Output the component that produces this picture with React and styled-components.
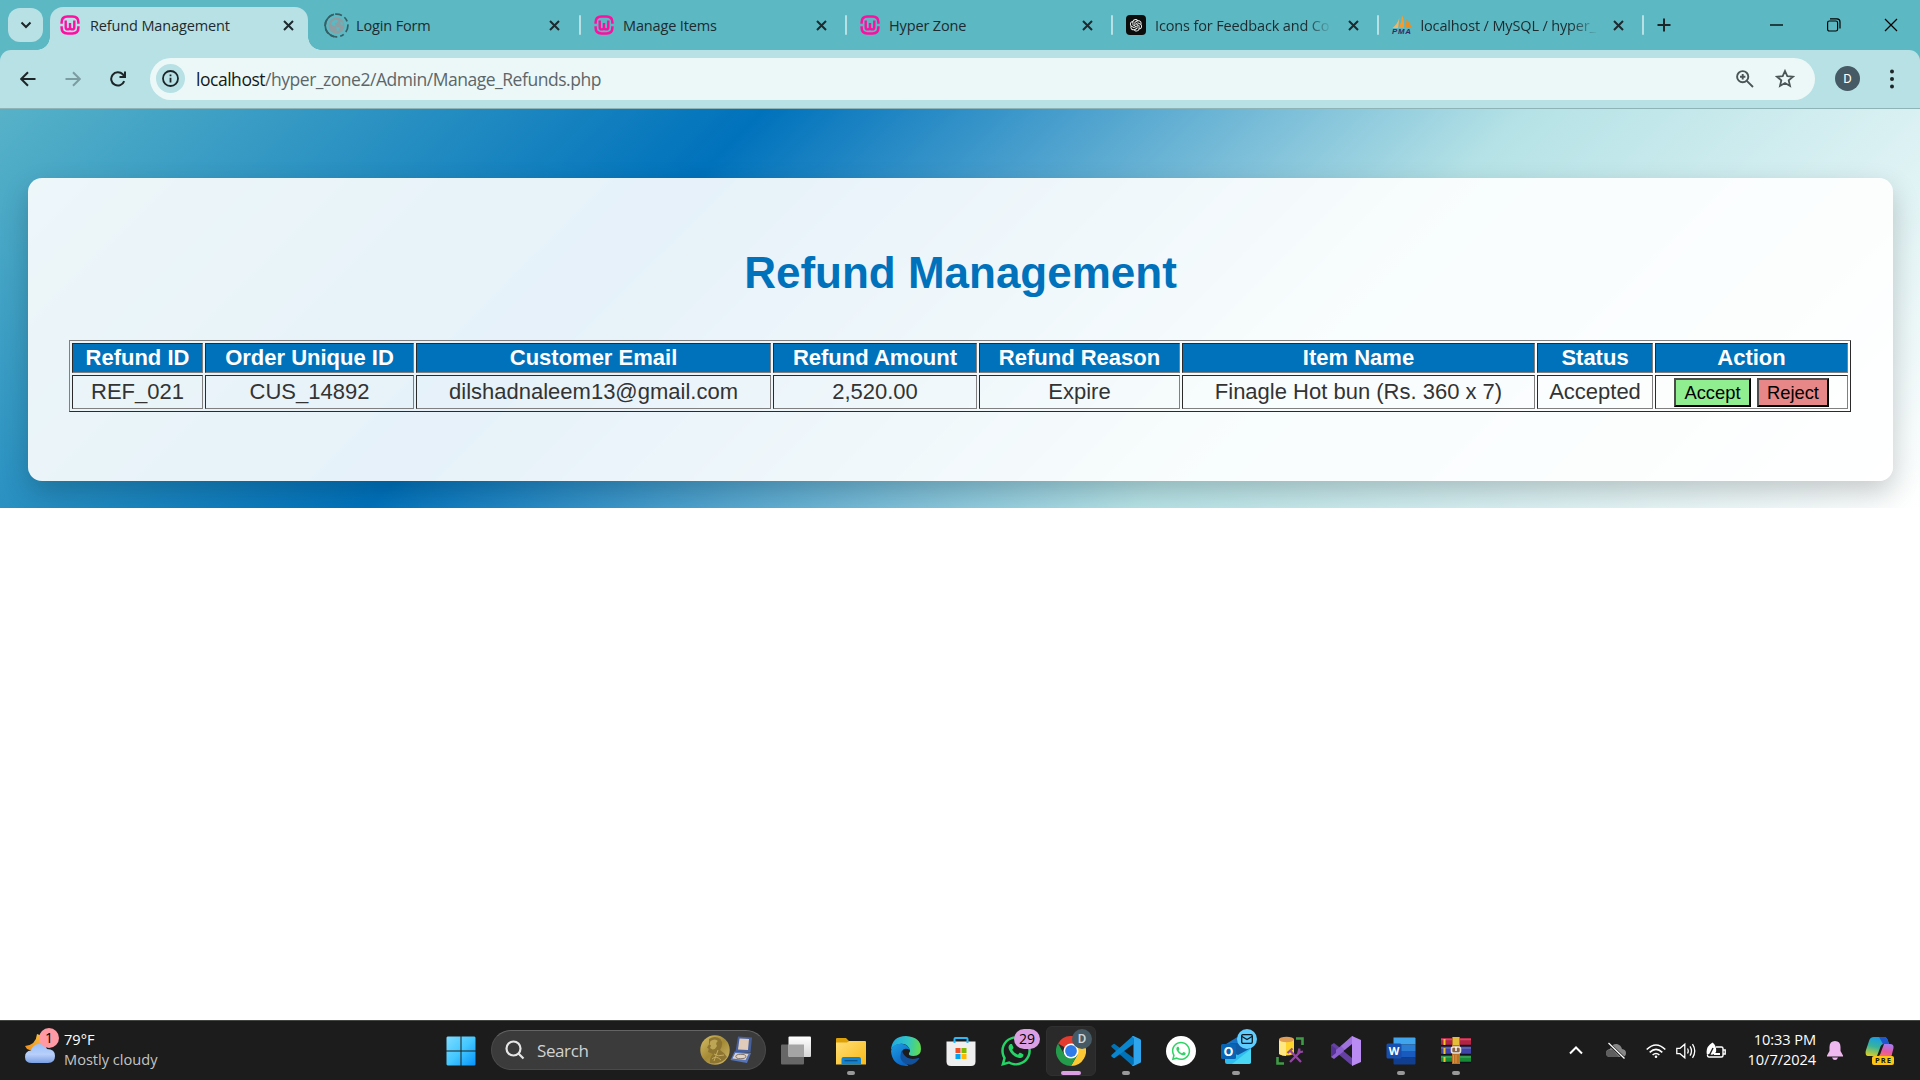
import React from 'react';
import styled, { createGlobalStyle } from 'styled-components';
import { FaWhatsapp } from 'react-icons/fa';
import { AiOutlineOpenAI } from 'react-icons/ai';

const ui = '"Segoe UI", "Open Sans", "Noto Sans", sans-serif';

const Global = createGlobalStyle`
  * { box-sizing: border-box; }
  html, body { margin: 0; padding: 0; background: #fff; }
  svg { display: block; flex: none; }
`;

const Screen = styled.div`
  width: 1920px;
  height: 1080px;
  display: flex;
  flex-direction: column;
  overflow: hidden;
  background: #fff;
`;

/* ---------- browser chrome ---------- */
const TabStrip = styled.div`
  height: 50px;
  flex: none;
  display: flex;
  background: #5cb8c2;
  font: 14.5px ${ui};
  color: #1d2b30;
`;
const TabSearch = styled.div`
  width: 35px;
  height: 34px;
  margin: 8px 7px 0 8px;
  border-radius: 12px;
  background: #b8e1e5;
  display: flex;
  align-items: center;
  justify-content: center;
`;
const Tab = styled.div`
  position: relative;
  width: ${p => p.$w || 266}px;
  height: 43px;
  margin-top: 7px;
  padding: 0 10px 7px;
  display: flex;
  align-items: center;
  border-radius: 13px 13px 0 0;
  background: ${p => (p.$active ? '#b8e1e5' : 'transparent')};
`;
const Flare = styled.i`
  position: absolute;
  bottom: 0;
  ${p => p.$side}: -13px;
  width: 13px;
  height: 13px;
  background: radial-gradient(circle at ${p => (p.$side === 'left' ? '0 0' : '100% 0')}, transparent 12.5px, #b8e1e5 13px);
`;
const Favicon = styled.span`
  width: ${p => p.$w || 20}px;
  margin-left: ${p => p.$ml || 0}px;
  margin-right: ${p => p.$mr || 10}px;
  flex: none;
  display: flex;
  align-items: center;
  justify-content: center;
`;
const TabTitle = styled.span`
  width: 179px;
  flex: none;
  white-space: nowrap;
  line-height: 22px;
  padding-top: 2px;
  letter-spacing: -0.14px;
  ${p => p.$fade && 'mask-image: linear-gradient(90deg, #000 150px, transparent 177px);'}
`;
const CloseBox = styled.span`
  width: 38px;
  flex: none;
  display: flex;
  justify-content: center;
`;
const Sep = styled.i`
  width: 2px;
  height: 20px;
  margin: 15px 0 0;
  background: #b8e1e5;
  border-radius: 1px;
  flex: none;
`;
const PlusBox = styled.span`
  width: 40px;
  height: 50px;
  display: flex;
  align-items: center;
  justify-content: center;
`;
const WindowControls = styled.div`
  margin-left: auto;
  margin-right: 1px;
  height: 49px;
  display: flex;
  align-items: center;
`;
const Control = styled.span`
  width: 57px;
  display: flex;
  justify-content: center;
`;
const ToolbarBack = styled.div`
  background: #5cb8c2;
  flex: none;
`;
const Toolbar = styled.div`
  height: 59px;
  padding: 0 11px 1px 5px;
  display: flex;
  align-items: center;
  border-radius: 11px 11px 0 0;
  border-bottom: 1px solid #8fb4b8;
  background: #b8e1e5;
`;
const ToolButton = styled.span`
  width: ${p => p.$w || 45}px;
  display: flex;
  align-items: center;
  justify-content: center;
`;
const Omnibox = styled.div`
  width: 1665px;
  height: 42px;
  margin-left: 10px;
  padding: 0 10px 0 6px;
  display: flex;
  align-items: center;
  border-radius: 21px;
  background: #ecf8f8;
  font: 17.5px ${ui};
  color: #5c6669;
`;
const InfoBadge = styled.span`
  width: 29px;
  height: 29px;
  border-radius: 50%;
  background: #b8e1e5;
  display: flex;
  align-items: center;
  justify-content: center;
`;
const Url = styled.span`
  margin-left: 11px;
  flex: 1;
  letter-spacing: -0.47px;
  b { font-weight: 400; color: #15191a; }
`;
const Avatar = styled.span`
  width: 25px;
  height: 25px;
  margin: 0 22px 0 20px;
  border-radius: 50%;
  background: #455a64;
  color: #fff;
  font: 13px/25px Roboto, sans-serif;
  text-align: center;
`;

/* ---------- page ---------- */
const Page = styled.div`
  height: 399px;
  flex: none;
  padding: 69px 27px 27px 28px;
  background: linear-gradient(135deg, #57b2c8, #0072bc 33%, #b5e2e6 66%, #fff);
  font-family: Arial, "Liberation Sans", sans-serif;
  color: #333;
  overflow: hidden;
`;
const Card = styled.div`
  height: 303px;
  padding: 41px;
  border-radius: 14px;
  background: rgba(255, 255, 255, 0.9);
  box-shadow: 0 11px 28px rgba(0, 0, 0, 0.2);
`;
const Heading = styled.h1`
  margin: 28px 0 42px;
  font-size: 44px;
  line-height: 51px;
  text-align: center;
  color: #0072bc;
`;
const Table = styled.table`
  width: 1782px;
  table-layout: fixed;
  border: 1px solid;
  border-color: #808080 #2b2b2b #2b2b2b #808080;
  border-spacing: 2px;
  font-size: 22px;
  text-align: center;
`;
const cell = `
  padding: 1px;
  border: 1px solid;
  border-color: #2b2b2b #808080 #808080 #2b2b2b;
  white-space: nowrap;
`;
const Th = styled.th`
  ${cell}
  width: ${p => p.$w}px;
  height: 30px;
  line-height: 26px;
  background: #0072bc;
  color: #fff;
`;
const Td = styled.td`
  ${cell}
  height: 34px;
  line-height: 26px;
`;
const Actions = styled.div`
  display: flex;
  justify-content: center;
  gap: 6px;
  margin-top: 1px;
`;
const ActionButton = styled.button`
  width: ${p => p.$w}px;
  height: 29px;
  padding: 0 0 1px;
  border: 2px outset #000;
  border-color: #4c4c4c #000 #000 #4c4c4c;
  background: ${p => p.$bg};
  color: #000;
  font: 18.33px/23px Arial, "Liberation Sans", sans-serif;
`;

/* ---------- taskbar ---------- */
const Taskbar = styled.div`
  height: 60px;
  margin-top: auto;
  flex: none;
  display: flex;
  align-items: stretch;
  border-top: 1px solid #424542;
  background: #1c1c1c;
  color: #fff;
  font: 14.6px/20px ${ui};
`;
const Weather = styled.div`
  width: 433px;
  padding: 8px 0 0 25px;
  display: flex;
  gap: 9px;
`;
const WeatherIcon = styled.div`
  position: relative;
  width: 30px;
  height: 40px;
`;
const Lines = styled.div`
  display: flex;
  flex-direction: column;
  letter-spacing: ${p => p.$ls || 0}px;
  text-align: ${p => p.$align || 'left'};
  white-space: nowrap;
`;
const Muted = styled.span`
  color: #c4c4c4;
`;
const AppSlot = styled.div`
  position: relative;
  width: 55px;
  height: 59px;
  display: flex;
  align-items: center;
  justify-content: center;
`;
const Tile = styled.div`
  width: 50px;
  height: 50px;
  display: flex;
  align-items: center;
  justify-content: center;
  border-radius: 6px;
  ${p => p.$active && 'background: #2a2a2a; border: 1px solid #303030;'}
`;
const Indicator = styled.i`
  position: absolute;
  bottom: 5px;
  left: 50%;
  transform: translateX(-50%);
  width: ${p => (p.$active ? 20 : 8)}px;
  height: 4px;
  border-radius: 2px;
  background: ${p => (p.$active ? '#dc9fe4' : '#999')};
`;
const Badge = styled.span`
  position: absolute;
  top: ${p => p.$top}px;
  left: ${p => p.$left}px;
  width: ${p => p.$w || 20}px;
  height: 20px;
  border-radius: 10px;
  display: flex;
  align-items: center;
  justify-content: center;
  background: ${p => p.$bg};
  color: ${p => p.$fg || '#000'};
  font: ${p => p.$font || `14px/20px ${ui}`};
`;
const SearchBox = styled.div`
  width: 275px;
  height: 40px;
  margin: 9px 2px 0 3px;
  padding: 0 11px 0 13px;
  display: flex;
  align-items: center;
  border: 1px solid #4a4a4a;
  border-top-color: #646464;
  border-radius: 20px;
  background: #3b3b3b;
  color: #d2d2d2;
  font-size: 17px;
  letter-spacing: -0.4px;
`;
const SearchLabel = styled.span`
  flex: 1;
  margin-left: 12px;
  padding-top: 1px;
`;
const Tray = styled.div`
  margin-left: auto;
  width: 360px;
  display: flex;
  align-items: center;
`;
const TrayIcon = styled.span`
  width: ${p => p.$w}px;
  flex: none;
  display: flex;
  align-items: center;
  justify-content: center;
`;
const Clock = styled(Lines)`
  width: 85px;
  margin-top: -3px;
`;

/* ---------- drawings ---------- */
const CloseX = ({ s = 9, w = 2, c = '#1d2b30' }) => (
  <svg width={s + 2} height={s + 2} viewBox={`-1 -1 ${s + 2} ${s + 2}`} stroke={c} strokeWidth={w}>
    <path d={`M0 0L${s} ${s}M${s} 0L0 ${s}`} />
  </svg>
);
const Wamp = () => (
  <svg width="20" height="20" viewBox="0 0 20 20" fill="none" stroke="#ff0fa0">
    <path d="M1.600 8.700V7.500Q1.600 1.600 7.500 1.600H12.500Q18.400 1.600 18.400 7.500V8.700M1.600 11.300V12.500Q1.600 18.400 7.500 18.400H12.500Q18.400 18.400 18.400 12.500V11.300" strokeWidth="2.500" />
    <path d="M5.700 5.400V12.200Q5.700 14.400 7.800 14.400Q10 14.400 10 12.200V8M10 12.200Q10 14.400 12.200 14.400Q14.300 14.400 14.300 12.200V5.400" strokeWidth="2.400" />
  </svg>
);
const Globe = () => (
  <svg width="25" height="25" viewBox="0 0 25 25">
    <circle cx="12.500" cy="12.500" r="11.400" fill="none" stroke="#365f66" strokeWidth="1.700" strokeDasharray="7 3 4 3 7 3 5 3" />
    <path d="M10 23.600A11.400 11.400 0 0 1 10 1.400" fill="none" stroke="#365f66" strokeWidth="1.700" />
    <circle cx="12.500" cy="12.500" r="8" fill="#8e9da1" />
    <path d="M8 8.300L11.600 6.500L14.500 7.800L12.200 10L10.500 10.600L12 12.400L10.400 13.300L7 11.200ZM12.200 13.500L15.800 14.600L14.700 17.400L12.700 18.200ZM16.200 8.600L18.500 9.400L18.800 12.300L16.500 11.600Z" fill="#5cb8c2" />
  </svg>
);
const Gpt = () => (
  <svg width="20" height="20" viewBox="0 0 20 20">
    <rect width="20" height="20" rx="4" fill="#0b0d0d" />
    <AiOutlineOpenAI x="2" y="2" size={16} color="#f0f0f0" />
  </svg>
);
const Pma = () => (
  <svg width="21" height="20" viewBox="0 0 21 20" overflow="visible">
    <path d="M8.300 3L7.200 13H1.400Q6.500 9 8.300 3Z" fill="#f5b563" />
    <path d="M11 0Q14 6 12.800 13H7.800Q11 7 11 0Z" fill="#f89c2c" />
    <path d="M15.500 4Q20 9 20.200 13H13.500Q16 9 15.500 4Z" fill="#ee8d20" />
    <text x="10.500" y="19.200" textAnchor="middle" fontFamily="Liberation Sans" fontWeight="700" fontStyle="italic" fontSize="7.800" textLength="19" fill="#2f2b68">PMA</text>
  </svg>
);
const Line = ({ w = 20, h = 20, sw = 2, c = '#1d2528', children, ...r }) => (
  <svg width={w} height={h} viewBox={`0 0 ${w} ${h}`} fill="none" stroke={c} strokeWidth={sw} {...r}>{children}</svg>
);
const Icon30 = ({ children }) => <svg width="30" height="30" viewBox="0 0 30 30">{children}</svg>;

const WindowsLogo = () => (
  <Icon30>
    <defs><linearGradient id="win" x1="0" y1="0" x2="1" y2="1" gradientUnits="objectBoundingBox">
      <stop stopColor="#7fdcff" /><stop offset=".5" stopColor="#43c8ff" /><stop offset="1" stopColor="#0792fa" /></linearGradient></defs>
    <path fill="url(#win)" d="M1.500 .5H14.500V14.500H.5V1.500ZM15.500 .5H28.500L29.500 1.500V14.500H15.500ZM.5 15.500H14.500V29.500H1.500L.5 28.500ZM15.500 15.500H29.500V28.500L28.500 29.500H15.500Z" />
  </Icon30>
);
const Medal = () => (
  <svg width="30" height="30" viewBox="0 0 30 30">
    <defs><linearGradient id="gold" x1="0" y1="0" x2="1" y2="1"><stop stopColor="#d5be69" /><stop offset=".5" stopColor="#a58a35" /><stop offset="1" stopColor="#d0bb70" /></linearGradient></defs>
    <circle cx="15" cy="15" r="14.700" fill="url(#gold)" />
    <path d="M9 4Q15 0 20.500 4Q24 9 20 15Q25 18 27 22Q21 30 10 28Q9 23 13 19L8 17L8.700 14L7 12.500L9 9.500Z" fill="#8d7431" />
    <path d="M10.500 6Q15 3 18 6Q15 8 17 11Q15 15 12.500 14.500L10 13L11 10.500L9.500 9.500Z" fill="#bda556" />
    <path d="M14 19Q18 22 24 20M12 24Q16 20 21 25M18 15L14 26" fill="none" stroke="#c5ad5d" strokeWidth="1" />
  </svg>
);
const MedalBox = () => (
  <svg width="24" height="28" viewBox="0 0 24 28">
    <path d="M8 .5L22 1.500L20.500 16.500L5.500 15.500Z" fill="#46609c" />
    <path d="M9.500 2.500L19 3L18 14L8 13.500Z" fill="#e0cbbb" />
    <path d="M4.500 15.500L21 17L17 27L.5 24Z" fill="#5674b8" />
    <path d="M5.300 17L18.500 18L15.500 24L2.500 22.500Z" fill="#dfd4ca" />
    <ellipse cx="10.800" cy="20.500" rx="5" ry="2.200" fill="none" stroke="#7d726a" />
  </svg>
);
const TaskView = () => (
  <Icon30>
    <defs><linearGradient id="tv" x1="0" y1="0" x2="0" y2="1"><stop stopColor="#fff" /><stop offset="1" stopColor="#d6d6d6" /></linearGradient></defs>
    <rect x="0" y="8.500" width="23" height="20" rx="1" fill="#676767" />
    <rect x="7.500" y=".5" width="22.500" height="20.500" rx="1" fill="url(#tv)" />
    <path d="M7.500 8.500H23V21H8.500L7.500 20Z" fill="#a5a5a5" />
  </Icon30>
);
const Folder = () => (
  <Icon30>
    <defs><linearGradient id="fo" x1="0" y1="0" x2="1" y2="1"><stop stopColor="#ffdf78" /><stop offset="1" stopColor="#f8b915" /></linearGradient></defs>
    <path d="M0 3Q0 2 1 2H10L13 5H27V12H0Z" fill="#dda006" />
    <path d="M0 6.500H11L13.500 5H29Q30 5 30 6V28.500H0Z" fill="url(#fo)" />
    <path d="M5.500 28.500V23Q5.500 21 7.500 21H23Q25 21 25 23V28.500Z" fill="#1283d0" />
    <path d="M8.500 24.700H21.500" stroke="#0b4e86" strokeWidth="1.200" />
  </Icon30>
);
const Edge = () => (
  <Icon30>
    <defs>
      <linearGradient id="e1" x1="0" y1=".3" x2="1" y2=".4"><stop stopColor="#1fa9e3" /><stop offset=".55" stopColor="#31c6c5" /><stop offset="1" stopColor="#61dc4e" /></linearGradient>
      <linearGradient id="e2" x1="0" y1="0" x2=".6" y2="1"><stop stopColor="#1d9fe2" /><stop offset="1" stopColor="#0b63c4" /></linearGradient>
    </defs>
    <path d="M0 14Q1 0 15 0Q30 1 30 13Q30 20 22.500 20Q17 20 18 17Q20 15 18 12Q15 7 8.500 8Q2.500 9 0 14Z" fill="url(#e1)" />
    <path d="M0 15Q2 7.700 9.500 7.700Q17 8 19 14Q13 10.500 10.500 16Q9 23 16 28.500Q19 30 15 30Q1 29 0 15Z" fill="url(#e2)" />
    <path d="M11 14.500Q7 23 13 27Q21 32 28 23Q29 21.500 27 22Q17 25 12.500 18Q11.500 16 11 14.500Z" fill="#12529d" />
  </Icon30>
);
const Store = () => (
  <Icon30>
    <path d="M.5 5.500H29.500V25.500Q29.500 30 25 30H5Q.5 30 .5 25.500Z" fill="#efefef" />
    <path d="M9.500 12H14.500V17H9.500Z" fill="#f25022" /><path d="M15.500 12H20.500V17H15.500Z" fill="#7fba00" />
    <path d="M9.500 18H14.500V23H9.500Z" fill="#00a4ef" /><path d="M15.500 18H20.500V23H15.500Z" fill="#ffb900" />
    <path d="M8.500 7V3Q8.500 2 9.500 2H20.500Q21.500 2 21.500 3V7" fill="none" stroke="#30b7f3" strokeWidth="2" />
  </Icon30>
);
const Chrome = () => (
  <Icon30>
    <path d="M15 15L2 7.500A15 15 0 0 1 28 7.500H15Z" fill="#e33b2e" />
    <path d="M15 7.500H28A15 15 0 0 1 15 30L21.500 18.700Z" fill="#fcc934" />
    <path d="M2 7.500A15 15 0 0 0 15 30L21.500 18.800L15 22.500L8.500 18.700Z" fill="#249a4b" />
    <circle cx="15" cy="15" r="7.500" fill="#fff" /><circle cx="15" cy="15" r="5.900" fill="#2f7bea" />
  </Icon30>
);
const VsCode = () => (
  <Icon30>
    <path d="M.5 9.500L2.500 8Q3.300 7.600 4 8.200L22.500 22V29.700Q21.500 29.800 20.700 29L.5 11Q0 10.200 .5 9.500Z" fill="#0072b8" />
    <path d="M.5 20.500L2.500 22Q3.300 22.400 4 21.800L22.500 8V.3Q21.500 .2 20.700 1L.5 19Q0 19.800 .5 20.500Z" fill="#0a86cf" />
    <path d="M22.500 0L29 3Q30 3.500 30 4.500V25.500Q30 26.500 29 27L22.500 30Q21.300 30 20.700 29Q22.500 29.500 22.500 27.500V2.500Q22.500 .5 20.700 1Q21.300 0 22.500 0Z" fill="#2fa5ee" />
  </Icon30>
);
const WhiteWhatsapp = () => (
  <Icon30><circle cx="15" cy="15" r="15" fill="#fff" /><FaWhatsapp x="4.500" y="4.500" size={21} color="#30d366" /></Icon30>
);
const Outlook = () => (
  <Icon30>
    <path d="M5 8L18 0L30 8V16H5Z" fill="#1673c6" />
    <path d="M9 7H22L29 12L24 20H12Z" fill="#0e5aa7" />
    <path d="M4 15L17 19L30 12V25.500Q30 28 27.500 28H6Q4 28 4 26Z" fill="#2ebdec" />
    <path d="M11 28L30 13V25.500Q30 28 27.500 28Z" fill="#49d7f4" />
    <rect y="8" width="15" height="15" rx="1.500" fill="#0864b4" />
    <text x="7.500" y="20" textAnchor="middle" fontFamily="Open Sans" fontWeight="700" fontSize="12.500" fill="#fff">O</text>
  </Icon30>
);
const SqlTool = () => (
  <Icon30>
    <path d="M3 3V18Q9 21 18 18V3Z" fill="#ffd52d" /><path d="M3 3V18Q6 20 10 20V3Z" fill="#ffe784" />
    <ellipse cx="10.500" cy="3.500" rx="7.500" ry="2.700" fill="#df9d55" />
    <path d="M20 2.500H26.500V9M1.500 21V27.500H8" fill="none" stroke="#3f9b46" strokeWidth="2.600" />
    <path d="M14 26L25 15M14.500 15L25 26M11.500 17L16.500 12.500M23.500 12.500L22.500 16.500L27 15.500" fill="none" stroke="#91479f" strokeWidth="2.300" />
  </Icon30>
);
const VisualStudio = () => (
  <Icon30>
    <path d="M0 9L3 7L22 22V30L19 28L0 12Z" fill="#6541a1" />
    <path d="M0 21L3 23L22 8V0L0 18Z" fill="#8c5fce" />
    <path d="M0 9L5 13V17L0 21Z" fill="#563196" />
    <path d="M21 0L30 4V26L21 30Z" fill="#bb8bf4" />
    <path d="M21 0L10 10L21 21Z" fill="#9f72de" />
    <path d="M21 8L12.500 15L21 22Z" fill="#1c1c1c" />
  </Icon30>
);
const Word = () => (
  <Icon30>
    <path d="M7.500 1.500H28.500Q29.500 1.500 29.500 2.500V8.500H7.500Z" fill="#41a5ee" /><path d="M7.500 8.500H29.500V15H7.500Z" fill="#2b7cd3" />
    <path d="M7.500 15H29.500V21.500H7.500Z" fill="#185abd" /><path d="M7.500 21.500H29.500V27.500Q29.500 28.500 28.500 28.500H8.500Q7.500 28.500 7.500 27.500Z" fill="#103f91" />
    <rect x=".5" y="7.500" width="15" height="15" rx="1.500" fill="#174fae" />
    <text x="8" y="19" textAnchor="middle" fontFamily="Open Sans" fontWeight="700" fontSize="11" fill="#fff">W</text>
  </Icon30>
);
const WinRar = () => (
  <Icon30>
    <path d="M0 2H30V10H0Z" fill="#b52344" /><path d="M0 10.500H30V19H0Z" fill="#3f43a8" /><path d="M0 19.500H30V27H0Z" fill="#168a35" />
    <path d="M0 3.500H30M0 12H30M0 21H30" stroke="#ffffff33" strokeWidth="1.500" />
    <path d="M0 9.500H30M0 18.500H30M0 26.500H30" stroke="#10131b" strokeWidth="1.400" />
    <path d="M3.500 3V9M3.500 12V18M3.500 21V26" stroke="#f0c32b" strokeWidth="2" />
    <path d="M11 1H19V28H11Z" fill="#b9742a" /><path d="M12 1H18V9H12Z" fill="#e4bd3b" /><path d="M12.500 19V27M15 19V27" stroke="#e2963c" />
    <rect x="10.500" y="11" width="9" height="6" rx="2" fill="#8c6140" stroke="#e5e5df" strokeWidth="1.600" /><path d="M15 11V15" stroke="#fff" strokeWidth="1.500" />
  </Icon30>
);
const Cloudy = () => (
  <svg width="30" height="38" viewBox="0 0 30 38">
    <defs>
      <linearGradient id="cl" x1="0" y1="0" x2="0" y2="1"><stop stopColor="#9cc0fa" /><stop offset=".55" stopColor="#b7cffa" /><stop offset="1" stopColor="#7a9fe4" /></linearGradient>
      <linearGradient id="mo" x1="1" y1="0" x2="0" y2="1"><stop stopColor="#f8c544" /><stop offset="1" stopColor="#ef8a15" /></linearGradient>
    </defs>
    <path d="M12 5Q21 7 19 17Q14 26 2 20L0 17Q11 16 12 5Z" fill="url(#mo)" />
    <path d="M7 34Q0 34 0 28Q0 22 6 21.500Q8 15 14 15Q20 15 22 20Q30 20 30 27Q30 34 23 34Z" fill="url(#cl)" />
  </svg>
);
const Copilot = () => (
  <svg width="30" height="30" viewBox="0 0 30 30">
    <defs>
      <linearGradient id="c1" x1=".5" y1="0" x2=".2" y2="1"><stop stopColor="#169bea" /><stop offset=".5" stopColor="#38b39b" /><stop offset="1" stopColor="#d9cf28" /></linearGradient>
      <linearGradient id="c2" x1=".6" y1="0" x2=".3" y2="1"><stop stopColor="#a77bf0" /><stop offset=".5" stopColor="#e657a0" /><stop offset="1" stopColor="#fb7b52" /></linearGradient>
    </defs>
    <path d="M9 1H19Q22 1 23 5L24 8H19Q16 8 15 12L12 20H3Q0 20 .7 15L4 5Q5 1 9 1Z" fill="url(#c1)" />
    <path d="M14 1H19Q22 1 23 5L24 8H18Z" fill="#2057cd" />
    <path d="M19 8H25Q29 8 28.500 12L26 22H10L12 20H13Q15 20 16 16Z" fill="url(#c2)" />
    <rect x="7" y="20" width="22" height="9" rx="2" fill="#ffc511" />
    <text x="18" y="27.300" textAnchor="middle" fontFamily="Open Sans" fontWeight="700" fontSize="7.500" textLength="16" fill="#171717">PRE</text>
  </svg>
);

const tabs = [
  { title: 'Refund Management', icon: <Wamp />, active: true },
  { title: 'Login Form', icon: <Globe />, big: true },
  { title: 'Manage Items', icon: <Wamp /> },
  { title: 'Hyper Zone', icon: <Wamp /> },
  { title: 'Icons for Feedback and Co', icon: <Gpt />, fade: true },
  { title: 'localhost / MySQL / hyper_', icon: <Pma />, fade: true },
];
const tabWidths = [258, 271, 264, 264, 263.5, 263];
const columns = [
  ['Refund ID', 131, 'REF_021'],
  ['Order Unique ID', 209, 'CUS_14892'],
  ['Customer Email', 355, 'dilshadnaleem13@gmail.com'],
  ['Refund Amount', 204, '2,520.00'],
  ['Refund Reason', 201, 'Expire'],
  ['Item Name', 353, 'Finagle Hot bun (Rs. 360 x 7)'],
  ['Status', 116, 'Accepted'],
  ['Action', 193, null],
];
const apps = [
  { icon: <TaskView /> },
  { icon: <Folder />, open: true },
  { icon: <Edge /> },
  { icon: <Store /> },
  { icon: <FaWhatsapp size={34} color="#25d366" />, badge: <Badge $top={8} $left={26} $w={26} $bg="#dc9fe4">29</Badge> },
  { icon: <Chrome />, open: true, active: true, badge: <Badge $top={8} $left={29} $bg="#455a64" $fg="#cfd5d8" $font="500 13px/20px Roboto, sans-serif">D</Badge> },
  { icon: <VsCode />, open: true },
  { icon: <WhiteWhatsapp /> },
  {
    icon: <Outlook />, open: true,
    badge: <Badge $top={8} $left={29} $bg="#60cdff"><Line w={12} h={10} sw={1.300} c="#0b1a22"><rect x=".7" y=".7" width="10.600" height="8.600" rx="1.200" /><path d="M1 2.500L6 5.500L11 2.500" /></Line></Badge>,
  },
  { icon: <SqlTool /> },
  { icon: <VisualStudio /> },
  { icon: <Word />, open: true },
  { icon: <WinRar />, open: true },
];

export default function App() {
  return (
    <Screen>
      <Global />
      <TabStrip>
        <TabSearch><Line w={12} h={8}><path d="M1.500 1.500L6 6L10.500 1.500" /></Line></TabSearch>
        {tabs.map((t, i) => (
          <React.Fragment key={t.title}>
            <Tab $active={t.active} $w={tabWidths[i]}>
              {t.active && <><Flare $side="left" /><Flare $side="right" /></>}
              <Favicon $w={t.big ? 25 : 20} $ml={t.big ? 6 : i > 1 ? 2.500 : 0} $mr={t.big ? 7 : i > 1 ? 9.500 : 10}>{t.icon}</Favicon>
              <TabTitle $fade={t.fade}>{t.title}</TabTitle>
              <CloseBox><CloseX /></CloseBox>
            </Tab>
            {i > 0 && <Sep />}
          </React.Fragment>
        ))}
        <PlusBox><Line w={14} h={14}><path d="M7 .5V13.500M.5 7H13.500" /></Line></PlusBox>
        <WindowControls>
          <Control><Line w={13} h={2} sw={1.300} c="#000"><path d="M0 1H13" /></Line></Control>
          <Control><Line w={14} h={14} sw={1.200} c="#000"><rect x=".6" y="3" width="10" height="10" rx="1.800" /><path d="M3 .9H10Q13 .9 13 4V10.500" /></Line></Control>
          <Control><CloseX s={12} w={1.200} c="#000" /></Control>
        </WindowControls>
      </TabStrip>
      <ToolbarBack>
        <Toolbar>
          <ToolButton><Line w={16} h={16}><path d="M15.500 8H1.500M8 1.200L1.200 8L8 14.800" /></Line></ToolButton>
          <ToolButton><Line w={16} h={16} c="#7b9da1"><path d="M.5 8H14.500M8 1.200L14.800 8L8 14.800" /></Line></ToolButton>
          <ToolButton><Line w={16} h={16}><path d="M14.200 10.200A6.700 6.700 0 1 1 12.800 3.300L14.500 5.500M15 .5V6H9.500" /></Line></ToolButton>
          <Omnibox>
            <InfoBadge><Line w={17} h={17} sw={1.800}><circle cx="8.500" cy="8.500" r="7.500" /><path d="M8.500 7.800V12.500M8.500 4.500V6.300" /></Line></InfoBadge>
            <Url><b>localhost</b>/hyper_zone2/Admin/Manage_Refunds.php</Url>
            <ToolButton $w={40}><Line w={18} h={18} sw={1.900} c="#4b5557"><circle cx="6.700" cy="6.700" r="5.600" /><path d="M10.800 10.800L17 17M6.700 4V9.400M4 6.700H9.400" /></Line></ToolButton>
            <ToolButton $w={40}><Line w={20} h={19} sw={1.800} c="#4b5557"><path d="M10 2L12.300 7.200L18 7.700L13.700 11.400L15 17L10 14L5 17L6.300 11.400L2 7.700L7.700 7.200Z" /></Line></ToolButton>
          </Omnibox>
          <Avatar>D</Avatar>
          <svg width="20" height="20" viewBox="0 0 20 20" fill="#1d2528"><circle cx="10" cy="2.500" r="2" /><circle cx="10" cy="10" r="2" /><circle cx="10" cy="17.500" r="2" /></svg>
        </Toolbar>
      </ToolbarBack>
      <Page>
        <Card>
          <Heading>Refund Management</Heading>
          <Table>
            <thead><tr>{columns.map(([name, w]) => <Th key={name} $w={w}>{name}</Th>)}</tr></thead>
            <tbody>
              <tr>
                {columns.map(([name, , value]) => (
                  <Td key={name}>
                    {value || (
                      <Actions>
                        <ActionButton $w={77} $bg="#90ee90">Accept</ActionButton>
                        <ActionButton $w={72} $bg="#e78787">Reject</ActionButton>
                      </Actions>
                    )}
                  </Td>
                ))}
              </tr>
            </tbody>
          </Table>
        </Card>
      </Page>
      <Taskbar>
        <Weather>
          <WeatherIcon>
            <Cloudy />
            <Badge $top={-1} $left={14} $bg="#ff99a4">1</Badge>
          </WeatherIcon>
          <Lines><span>79°F</span><Muted>Mostly cloudy</Muted></Lines>
        </Weather>
        <AppSlot><WindowsLogo /></AppSlot>
        <SearchBox>
          <Line w={20} h={20} sw={2.200} c="#e6e6e6"><circle cx="8.500" cy="8.500" r="7" /><path d="M13.500 13.500L18.500 18.500" /></Line>
          <SearchLabel>Search</SearchLabel>
          <Medal />
          <MedalBox />
        </SearchBox>
        {apps.map((a, i) => (
          <AppSlot key={i}>
            <Tile $active={a.active}>{a.icon}</Tile>
            {a.badge}
            {a.open && <Indicator $active={a.active} />}
          </AppSlot>
        ))}
        <Tray>
          <TrayIcon $w={32}><Line w={14} h={9} c="#fff"><path d="M1 7.500L7 1.500L13 7.500" /></Line></TrayIcon>
          <TrayIcon $w={48}>
            <svg width="22" height="18" viewBox="0 0 22 18"><path d="M5 15Q1 15 1 11Q1 7.500 5 7Q7 1.500 12 2Q16 3 17 7Q21 7.500 21 11Q21 15 17 15Z" fill="#868686" /><path d="M8 8L14 15H5Q1 15 1 11Q1 7 8 8Z" fill="#5e5e5e" /><path d="M3 1L20 17" stroke="#1c1c1c" strokeWidth="3" /><path d="M3.500 1L19.500 16.500" stroke="#fff" strokeWidth="1.300" /></svg>
          </TrayIcon>
          <TrayIcon $w={32}><Line w={20} h={16} sw={1.600} c="#fff"><path d="M.7 6.500Q10-2.500 19.300 6.500M3.700 9.300Q10 3.300 16.300 9.300M6.600 12Q10 9 13.400 12" /><circle cx="10" cy="13.700" r="1.300" fill="#fff" stroke="none" /></Line></TrayIcon>
          <TrayIcon $w={28}><Line w={20} h={18} sw={1.300} c="#fff"><path d="M.8 6.300H4L8.800 2.200V15.800L4 11.700H.8ZM11.500 6.500Q13 9 11.500 11.500M14 4.300Q17 9 14 13.700M16.500 2.200Q21 9 16.500 15.800" /></Line></TrayIcon>
          <TrayIcon $w={31}>
            <svg width="20" height="17" viewBox="0 0 20 17" fill="none" stroke="#fff" strokeWidth="1.400"><path d="M10 5H15.500Q17 5 17 6.500V13.500Q17 15 15.500 15H3Q1.500 15 1.500 13M17.500 8H19.200V12H17.500" /><path d="M1 13Q-1 5 6.500 .5Q11 4 10 10Q8 14 3 12Z" fill="#fff" stroke="none" /><path d="M3 14L7 6" stroke="#1c1c1c" /><path d="M8 12H14" strokeWidth="2" /></svg>
          </TrayIcon>
          <Clock $align="right" $ls={-0.080}><span>10:33 PM</span><span>10/7/2024</span></Clock>
          <TrayIcon $w={38}><svg width="16" height="19" viewBox="0 0 16 19" fill="#efb8ef"><path d="M8 0Q13.500 0 13.500 6V10L16 14.500V15.500H0V14.500L2.500 10V6Q2.500 0 8 0ZM5 16.500H11Q10 19 8 19Q6 19 5 16.500Z" /></svg></TrayIcon>
          <TrayIcon $w={52}><Copilot /></TrayIcon>
        </Tray>
      </Taskbar>
    </Screen>
  );
}
